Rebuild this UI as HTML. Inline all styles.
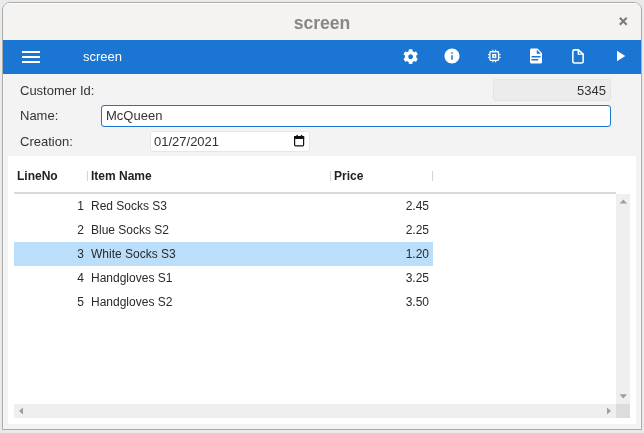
<!DOCTYPE html>
<html><head><meta charset="utf-8">
<style>
*{box-sizing:border-box;margin:0;padding:0}
html,body{width:644px;height:433px;overflow:hidden;background:#eaeaea;font-family:"Liberation Sans",sans-serif;}
.abs{position:absolute}
#win{will-change:transform;position:absolute;left:2px;top:2px;width:640px;height:428px;border:1px solid #aaaaaa;border-radius:8px 8px 0 0;background:#f3f3f3;overflow:hidden;box-shadow:inset 1px 0 #f8f8f8,inset -1px 0 #f8f8f8}
#title{position:absolute;left:0;top:0;width:638px;height:37px;background:#f4f3f1;border-top:1px solid #fff}
#title .t{position:absolute;left:0;width:638px;top:9px;text-align:center;font-weight:bold;font-size:17.6px;color:#878787;letter-spacing:0}
#tb{position:absolute;left:0;top:37px;width:638px;height:34px;background:#1a76d2}
.lbl{position:absolute;font-size:13px;color:#333;line-height:15px}
.inp{position:absolute;border-radius:3px;font-size:13px;color:#333;line-height:15px}
#panel{position:absolute;left:5px;top:153px;width:628px;height:268px;background:#fff;border:1px solid #fff}
.hd{position:absolute;font-size:12px;font-weight:bold;color:#222;line-height:14px;top:12px}
.sep{position:absolute;top:14px;width:1px;height:10px;background:#d4d4d4}
.row{position:absolute;left:5px;width:419px;height:24px}
.cell{position:absolute;font-size:12px;color:#2a2a2a;line-height:14px;top:5px}
</style></head><body>
<div id="win">
  <div id="title"><div class="t">screen</div>
    <svg class="abs" style="left:615px;top:12px" width="11" height="11" viewBox="0 0 11 11"><path d="M1.8 1.8L8.7 8.7M8.7 1.8L1.8 8.7" stroke="#7b7b7b" stroke-width="2.1" stroke-linecap="butt"/></svg>
  </div>
  <div id="tb">
    <svg class="abs" style="left:19px;top:11px" width="18" height="14" viewBox="0 0 18 14"><rect x="0" y="0" width="18" height="2" fill="#fff"/><rect x="0" y="5" width="18" height="2" fill="#fff"/><rect x="0" y="10" width="18" height="2" fill="#fff"/></svg>
    <div class="abs" style="left:80px;top:9px;font-size:13px;color:#fff;line-height:15px">screen</div>
    <!-- gear -->
    <svg class="abs" style="left:399.7px;top:8.5px" width="15.26" height="15.26" viewBox="0 0 512 512"><path fill="#fff" d="M487.4 315.7l-42.6-24.6c4.3-23.2 4.3-47 0-70.2l42.6-24.6c4.9-2.8 7.1-8.6 5.5-14-11.1-35.6-30-67.8-54.7-94.6-3.8-4.1-10-5.1-14.8-2.300L380.8 110c-17.9-15.4-38.5-27.3-60.8-35.1V25.8c0-5.6-3.9-10.5-9.4-11.7-36.7-8.2-74.3-7.8-109.2 0-5.5 1.2-9.4 6.1-9.4 11.7V75c-22.2 7.9-42.8 19.8-60.8 35.1L88.7 85.5c-4.9-2.8-11-1.9-14.8 2.3-24.7 26.7-43.6 58.9-54.7 94.6-1.7 5.4.6 11.200 5.5 14L67.3 221c-4.3 23.2-4.3 47 0 70.2l-42.6 24.6c-4.9 2.8-7.1 8.6-5.5 14 11.1 35.6 30 67.8 54.7 94.6 3.8 4.1 10 5.1 14.8 2.3l42.6-24.6c17.9 15.4 38.5 27.3 60.8 35.1v49.2c0 5.6 3.9 10.5 9.4 11.700 36.7 8.2 74.3 7.8 109.2 0 5.5-1.2 9.4-6.1 9.4-11.7v-49.2c22.2-7.9 42.8-19.8 60.8-35.1l42.6 24.6c4.9 2.8 11 1.9 14.8-2.3 24.7-26.7 43.6-58.9 54.7-94.6 1.5-5.5-.7-11.3-5.6-14.1zM256 336c-44.1 0-80-35.9-80-80s35.9-80 80-80 80 35.9 80 80-35.9 80-80 80z"/></svg>
    <!-- info -->
    <svg class="abs" style="left:440px;top:7.3px" width="18" height="18" viewBox="0 0 24 24"><path fill="#fff" d="M12 2C6.48 2 2 6.48 2 12s4.48 10 10 10 10-4.48 10-10S17.52 2 12 2zm1 15h-2v-6h2v6zm0-8h-2V7h2v2z"/></svg>
    <!-- memory -->
    <svg class="abs" style="left:483px;top:7px" width="17" height="18" viewBox="0 0 17 18"><rect x="3.95" y="4.75" width="8.60" height="8.60" rx="0.8" fill="none" stroke="#fff" stroke-width="1.3"/><rect x="6.15" y="6.95" width="4.20" height="4.20" fill="#fff"/><rect x="7.65" y="8.45" width="1.20" height="1.20" fill="#1a76d2"/><rect x="6.30" y="2.70" width="1.1" height="1.60" fill="#fff"/><rect x="6.30" y="13.80" width="1.1" height="1.60" fill="#fff"/><rect x="1.90" y="7.10" width="1.60" height="1.1" fill="#fff"/><rect x="13.00" y="7.10" width="1.60" height="1.1" fill="#fff"/><rect x="9.10" y="2.70" width="1.1" height="1.60" fill="#fff"/><rect x="9.10" y="13.80" width="1.1" height="1.60" fill="#fff"/><rect x="1.90" y="9.90" width="1.60" height="1.1" fill="#fff"/><rect x="13.00" y="9.90" width="1.60" height="1.1" fill="#fff"/></svg>
    <!-- description -->
    <svg class="abs" style="left:524px;top:7px" width="18" height="18" viewBox="0 0 24 24"><path fill="#fff" d="M13,9H18.5L13,3.5V9M6,2H14L20,8V20A2,2 0 0,1 18,22H6C4.89,22 4,21.1 4,20V4C4,2.89 4.89,2 6,2M15,18V16H6V18H15M18,14V12H6V14H18Z"/></svg>
    <!-- file outline -->
    <svg class="abs" style="left:567px;top:7px" width="16" height="18" viewBox="0 0 16 18"><path d="M2.85 4.4Q2.85 2.85 4.4 2.85H8.3L13.15 7.2V14.4Q13.15 15.95 11.6 15.95H4.4Q2.85 15.95 2.85 14.4Z" fill="none" stroke="#fff" stroke-width="1.55" stroke-linejoin="round"/><path d="M8.3 2.85V7.1H13.15" fill="none" stroke="#fff" stroke-width="1.4"/></svg>
    <!-- play -->
    <svg class="abs" style="left:608px;top:7.4px" width="18" height="18" viewBox="0 0 24 24"><path fill="#fff" d="M8 5v14l11-7z"/></svg>
  </div>

  <div class="lbl" style="left:17px;top:80px">Customer Id:</div>
  <div class="inp" style="left:490px;top:76px;width:118px;height:22px;background:#ececec;border:1px solid #e3e3e3;text-align:right;padding:3px 4px 0 0">5345</div>
  <div class="lbl" style="left:17px;top:105px">Name:</div>
  <div class="inp" style="left:98px;top:102px;width:510px;height:22px;background:#fff;border:1px solid #1a76d2;padding:2px 0 0 4px">McQueen</div>
  <div class="lbl" style="left:17px;top:131px">Creation:</div>
  <div class="inp" style="left:147px;top:128px;width:160px;height:21px;background:#fff;border:1px solid #e6e6e6;padding:2px 0 0 3px">01/27/2021
    <svg class="abs" style="left:142px;top:1px" width="14" height="15" viewBox="0 0 14 15"><rect x="1.6" y="3.6" width="9" height="9.2" rx="1" fill="none" stroke="#111" stroke-width="1.2"/><rect x="1" y="3" width="10.2" height="3" fill="#111"/><path d="M2.9 3.2L4.1 1.6L5.3 3.2zM7.3 3.2L8.5 1.6L9.7 3.2z" fill="#111"/></svg>
  </div>

  <div id="panel">
    <div class="hd" style="left:8px">LineNo</div>
    <div class="sep" style="left:78px"></div>
    <div class="hd" style="left:82px">Item Name</div>
    <div class="sep" style="left:321px"></div>
    <div class="hd" style="left:325px">Price</div>
    <div class="sep" style="left:423px"></div>
    <div class="abs" style="left:5px;top:35px;width:602px;height:2px;background:#dadada"></div>

    <div class="row" style="top:37px">
      <div class="cell" style="left:0;width:70px;text-align:right">1</div>
      <div class="cell" style="left:77px">Red Socks S3</div>
      <div class="cell" style="left:316px;width:99px;text-align:right">2.45</div>
    </div>
    <div class="row" style="top:61px">
      <div class="cell" style="left:0;width:70px;text-align:right">2</div>
      <div class="cell" style="left:77px">Blue Socks S2</div>
      <div class="cell" style="left:316px;width:99px;text-align:right">2.25</div>
    </div>
    <div class="row" style="top:85px;background:#bbdefb">
      <div class="cell" style="left:0;width:70px;text-align:right">3</div>
      <div class="cell" style="left:77px">White Socks S3</div>
      <div class="cell" style="left:316px;width:99px;text-align:right">1.20</div>
    </div>
    <div class="row" style="top:109px">
      <div class="cell" style="left:0;width:70px;text-align:right">4</div>
      <div class="cell" style="left:77px">Handgloves S1</div>
      <div class="cell" style="left:316px;width:99px;text-align:right">3.25</div>
    </div>
    <div class="row" style="top:133px">
      <div class="cell" style="left:0;width:70px;text-align:right">5</div>
      <div class="cell" style="left:77px">Handgloves S2</div>
      <div class="cell" style="left:316px;width:99px;text-align:right">3.50</div>
    </div>

    <!-- vertical scrollbar -->
    <div class="abs" style="left:607px;top:37px;width:14px;height:210px;background:#efefef">
      <svg class="abs" style="left:3px;top:5px" width="9" height="5" viewBox="0 0 9 5"><path d="M0.6 4.6L4.3 0.4L8 4.6z" fill="#9e9e9e"/></svg>
      <svg class="abs" style="left:3px;top:200px" width="9" height="5" viewBox="0 0 9 5"><path d="M0.6 0.3L4.3 4.4L8 0.3z" fill="#9e9e9e"/></svg>
    </div>
    <!-- horizontal scrollbar -->
    <div class="abs" style="left:5px;top:247px;width:602px;height:14px;background:#efefef">
      <svg class="abs" style="left:0;top:3px" width="10" height="8" viewBox="0 0 10 8"><path d="M4.5 0.5L0.5 4L4.5 7.5z" transform="translate(4.5,0)" fill="#9e9e9e"/></svg>
      <svg class="abs" style="left:592px;top:3px" width="6" height="8" viewBox="0 0 6 8"><path d="M1 0.5L5 4L1 7.5z" fill="#9e9e9e"/></svg>
    </div>
    <div class="abs" style="left:607px;top:247px;width:14px;height:14px;background:#dcdcdc"></div>
  </div>
</div>
</body></html>
